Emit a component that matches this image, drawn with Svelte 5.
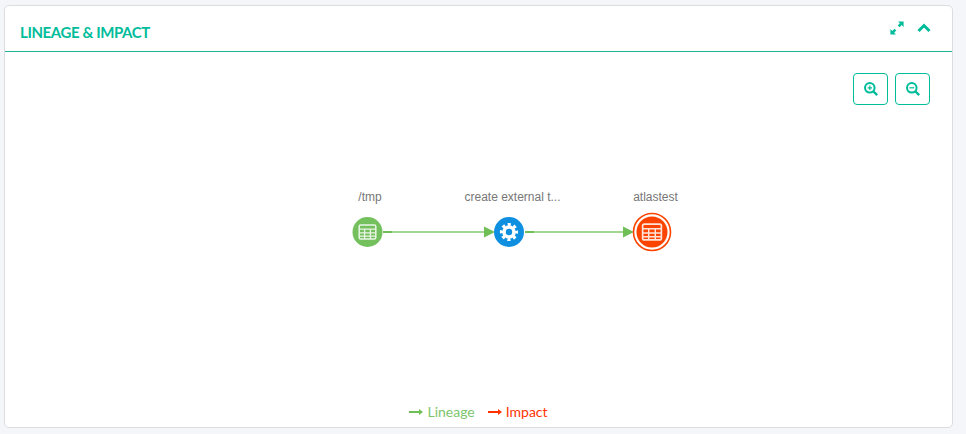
<script>
  const nodes = [
    { label: '/tmp', lx: 370, cx: 367.5, r: 15, fill: '#74c05d', icon: 'table', s: 1 },
    { label: 'create external t...', lx: 512.5, cx: 509, r: 15, fill: '#0f8fe0', icon: 'gear', s: 1 },
    { label: 'atlastest', lx: 655.5, cx: 652, r: 15.5, fill: '#fb4400', icon: 'table', ring: true, s: 1.13 }
  ];
  const edges = [
    { x1: 383, x2: 484 },
    { x1: 525, x2: 623 }
  ];
  const cy = 232 - 52;
</script>

<div class="page">
  <section class="card">
    <header class="head">
      <h2>LINEAGE &amp; IMPACT</h2>
      <div class="tools">
        <svg class="expand" width="14" height="14" viewBox="0 0 14 14">
          <path d="M8 0.4H13.6V6L11.7 4.1L9.5 6.3L7.7 4.5L9.9 2.3Z" />
          <path d="M6 13.6H0.4V8L2.3 9.9L4.5 7.7L6.3 9.5L4.1 11.7Z" />
        </svg>
        <svg class="chev" width="14" height="10" viewBox="0 0 14 10">
          <path d="M1.5 8L7 2.5L12.5 8" />
        </svg>
      </div>
    </header>
    <div class="body">
      <div class="zoom">
        <button aria-label="Zoom in">
          <svg width="16" height="16" viewBox="0 0 16 16">
            <circle cx="6.8" cy="6.8" r="4.8" />
            <path class="thick" d="M10.5 10.5L14.2 14.2" />
            <path class="thin" d="M4.6 6.8H9M6.8 4.6V9" />
          </svg>
        </button>
        <button aria-label="Zoom out">
          <svg width="16" height="16" viewBox="0 0 16 16">
            <circle cx="6.8" cy="6.8" r="4.8" />
            <path class="thick" d="M10.5 10.5L14.2 14.2" />
            <path class="thin" d="M4.4 6.8H9.2" />
          </svg>
        </button>
      </div>

      <svg class="graph" width="947" height="375" viewBox="0 0 947 375">
        <g transform="translate(-5 0)">
          {#each edges as e}
            <line x1={e.x1} x2={e.x2} y1={cy} y2={cy} stroke="#a3d794" stroke-width="2" />
            <line x1={e.x1} x2={e.x1 + 9} y1={cy} y2={cy} stroke="#6fbf56" stroke-width="2" />
            <path d="M{e.x2} {cy - 5.5}L{e.x2 + 11} {cy}L{e.x2} {cy + 5.5}Z" fill="#6fbf56" />
          {/each}
          {#each nodes as n}
            <text x={n.lx} y={cy - 31} class="label">{n.label}</text>
            {#if n.ring}
              <circle cx={n.cx} cy={cy} r="18.5" fill="#fff" stroke={n.fill} stroke-width="1.6" />
            {/if}
            <circle cx={n.cx} cy={cy} r={n.r} fill={n.fill} />
            {#if n.icon === 'table'}
              <g transform="translate({n.cx} {cy}) scale({n.s})" fill="none" stroke="#fff" opacity="0.85">
                <rect x="-8.3" y="-7" width="16.6" height="14" rx="1.5" stroke-width="1.5" />
                <path d="M-8.3 -2.8H8.3M-8.3 0.8H8.3M-8.3 4.2H8.3M-2.9 -3V7M2.9 -3V7" stroke-width="1.3" />
              </g>
            {:else}
              <g transform="translate({n.cx} {cy})" fill="none" stroke="#fff">
                <circle r="5" stroke-width="3.6" />
                <circle r="7.6" stroke-width="3" stroke-dasharray="3.1 2.87" stroke-dashoffset="1.55" />
              </g>
            {/if}
          {/each}
        </g>
      </svg>

      <footer class="legend">
        <span class="lineage">
          <svg width="14" height="8" viewBox="0 0 14 8"><path d="M0 4H11" /><path class="head-a" d="M10 1L14 4L10 7Z" /></svg>
          Lineage
        </span>
        <span class="impact">
          <svg width="14" height="8" viewBox="0 0 14 8"><path d="M0 4H11" /><path class="head-a" d="M10 1L14 4L10 7Z" /></svg>
          Impact
        </span>
      </footer>
    </div>
  </section>
</div>

<style>
  :global(body) {
    margin: 0;
    background: #f5f6fa;
  }
  .page {
    padding: 5px 13px 5px 4px;
    height: 434px;
    box-sizing: border-box;
  }
  .card {
    height: 423px;
    box-sizing: border-box;
    background: #fff;
    border: 1px solid #dcdde0;
    border-radius: 5px;
    display: flex;
    flex-direction: column;
    font-family: Lato, "Open Sans", sans-serif;
  }
  .head {
    height: 46px;
    flex: none;
    box-sizing: border-box;
    border-bottom: 1px solid #1cb495;
    display: flex;
    align-items: flex-start;
    justify-content: space-between;
    padding: 0 21px 0 15px;
  }
  h2 {
    margin: 16px 0 0;
    font-size: 15px;
    line-height: 20px;
    font-weight: 700;
    letter-spacing: -0.4px;
    color: #00bc9a;
  }
  .tools {
    display: flex;
    gap: 13px;
    align-items: center;
    padding-top: 15px;
  }
  .expand path {
    fill: #00bc9a;
  }
  .chev path {
    fill: none;
    stroke: #00bc9a;
    stroke-width: 3;
  }
  .body {
    position: relative;
    flex: 1;
    min-height: 0;
  }
  .zoom {
    position: absolute;
    top: 21px;
    right: 22px;
    display: flex;
    gap: 7px;
    z-index: 1;
  }
  .zoom button {
    width: 35px;
    height: 32px;
    padding: 0;
    box-sizing: border-box;
    background: #fff;
    border: 1px solid #00bc9a;
    border-radius: 4px;
    display: flex;
    align-items: center;
    justify-content: center;
  }
  .zoom svg {
    fill: none;
    stroke: #00bc9a;
  }
  .zoom circle {
    stroke-width: 2;
  }
  .zoom .thick {
    stroke-width: 2.4;
  }
  .zoom .thin {
    stroke-width: 1.2;
  }
  .graph {
    display: block;
    position: absolute;
    left: 0;
    top: 0;
  }
  .label {
    font-family: "Liberation Sans", Arial, sans-serif;
    font-size: 12px;
    fill: #777;
    text-anchor: middle;
  }
  .legend {
    position: absolute;
    left: 0;
    right: 0;
    bottom: 6px;
    display: flex;
    justify-content: center;
    gap: 13px;
    font-size: 14px;
    line-height: 18px;
  }
  .legend span {
    display: flex;
    align-items: center;
    gap: 4px;
  }
  .lineage {
    color: #7cc56b;
  }
  .impact {
    color: #ff3300;
  }
  .lineage path {
    stroke: #6fbf56;
    stroke-width: 2;
    fill: none;
  }
  .impact path {
    stroke: #ff3300;
    stroke-width: 2;
    fill: none;
  }
  .legend .lineage .head-a {
    fill: #6fbf56;
    stroke: none;
  }
  .legend .impact .head-a {
    fill: #ff3300;
    stroke: none;
  }
</style>
